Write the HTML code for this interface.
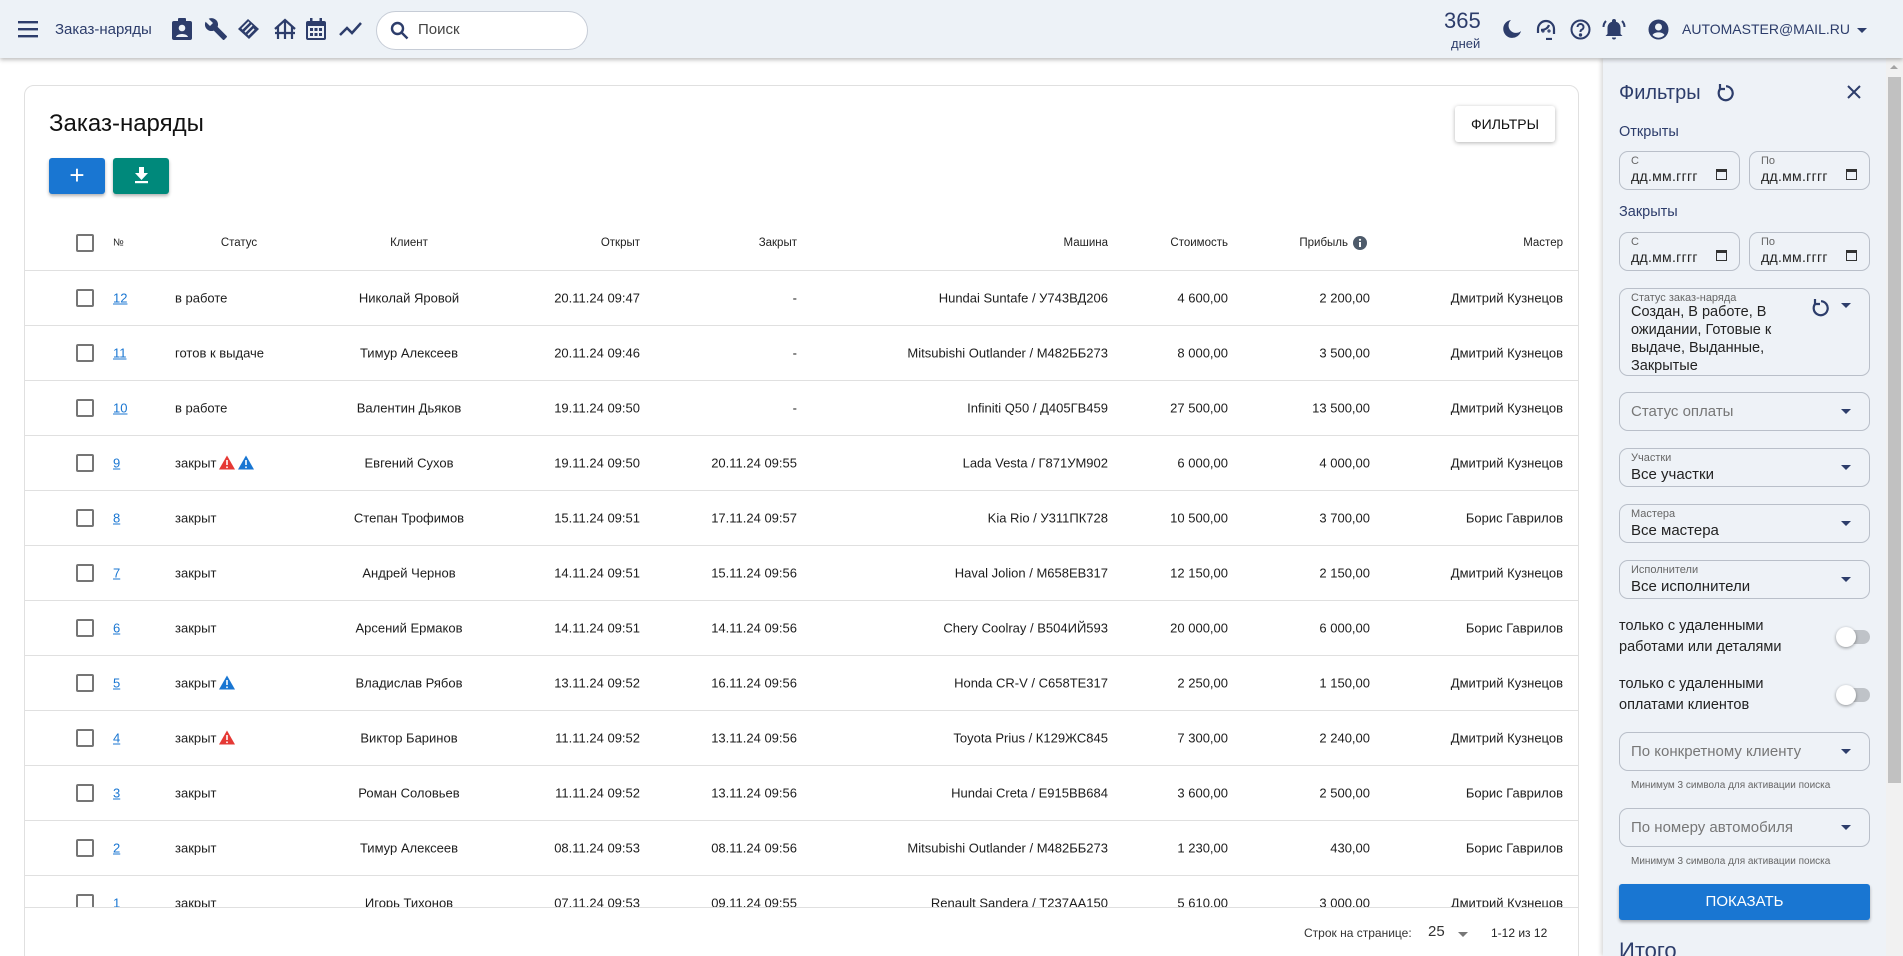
<!DOCTYPE html>
<html><head><meta charset="utf-8">
<style>
*{box-sizing:border-box;margin:0;padding:0}
html,body{width:1903px;height:956px;overflow:hidden}
body{background:#fff;font-family:"Liberation Sans",sans-serif;color:#1d1d1d;position:relative}
.abs{position:absolute}
.hdr{left:0;top:0;width:1903px;height:58px;background:#edf2f7;box-shadow:0 2px 4px rgba(0,0,0,.25);z-index:3}
.nav{fill:#2d3d6b}
.card{left:24px;top:85px;width:1555px;height:880px;border:1px solid #e0e0e0;border-radius:10px;background:#fff}
.row{position:absolute;left:24px;width:1555px;height:55px;border-top:1px solid #e0e0e0;font-size:13px}
.row span,.th span{position:absolute;top:50%;transform:translateY(-50%);white-space:nowrap}
.cb{position:absolute;left:52px;top:50%;margin-top:-9px;width:18px;height:18px;border:2px solid #757575;border-radius:2px}
.r{text-align:right}
.th{position:absolute;left:24px;top:215px;width:1555px;height:55px;font-size:11.5px;color:#222}
a{color:#1976d2;text-decoration:underline}
.tri{display:inline-block;vertical-align:-2px;margin-left:3px}
.panel{left:1603px;top:58px;width:283px;height:898px;background:#eef2f7;box-shadow:-2px 0 4px rgba(0,0,0,.15);z-index:2;color:#2d3d6b}
.fld{position:absolute;left:16px;width:251px;height:39px;border:1px solid #b9bfc9;border-radius:9px}
.lbl{position:absolute;left:11px;top:3px;font-size:11px;color:#666}
.val{position:absolute;left:11px;top:17px;font-size:15px;color:#222}
.ph{position:absolute;left:11px;top:10px;font-size:15px;color:#777}
.caret{position:absolute;right:18px;top:16px;width:0;height:0;border-left:5px solid transparent;border-right:5px solid transparent;border-top:5px solid #2d3d6b}
.dt{position:absolute;width:121px;height:39px;border:1px solid #b9bfc9;border-radius:9px}
.dt .l{position:absolute;left:11px;top:3px;font-size:11px;color:#666}
.dt .v{position:absolute;left:11px;top:16px;font-size:14px;color:#222;letter-spacing:.3px}
.dt i{position:absolute;right:12px;top:17px;width:11px;height:11px;border:1.5px solid #333;border-top-width:3px}
.hint{position:absolute;left:28px;font-size:10px;color:#666}
.tog{position:absolute;left:235px;width:32px;height:14px;border-radius:7px;background:#bfc3c8}
.tog:after{content:"";position:absolute;left:-2px;top:-3px;width:20px;height:20px;border-radius:50%;background:#fff;box-shadow:0 1px 3px rgba(0,0,0,.4)}
.tt{position:absolute;left:16px;font-size:14.5px;color:#222;line-height:21px}
</style></head><body>

<div class="abs hdr">
 <svg class="abs" style="left:18px;top:20px" width="22" height="18"><rect y="1" width="20" height="2.4" fill="#2d3d6b"/><rect y="8" width="20" height="2.4" fill="#2d3d6b"/><rect y="15" width="20" height="2.4" fill="#2d3d6b"/></svg>
 <div class="abs" style="left:55px;top:21px;font-size:15px;color:#2d3d6b">Заказ-наряды</div>
 <svg class="abs nav" style="left:172px;top:18px" width="20" height="22"><rect x="6" y="0" width="8" height="5" rx="1"/><rect x="0" y="3" width="20" height="19" rx="2"/><circle cx="10" cy="10" r="3.3" fill="#edf2f7"/><path d="M4 19c1-4 11-4 12 0z" fill="#edf2f7"/></svg>
 <svg class="abs nav" style="left:204px;top:17px" width="24" height="24"><path d="M22.7 19l-9.1-9.1c.9-2.3.4-5-1.5-6.9-2-2-5-2.4-7.4-1.3L9 6 6 9 1.6 4.7C.4 7.1.9 10.1 2.9 12.1c1.9 1.9 4.6 2.4 6.9 1.5l9.1 9.1c.4.4 1 .4 1.4 0l2.3-2.3c.5-.4.5-1.1.1-1.4z"/></svg>
 <svg class="abs nav" style="left:236px;top:18px" width="26" height="22"><path d="M2 11L12 1l11 10-10 10z"/><path d="M6 11l7-7M9 14l7-7M12 17l6-6" stroke="#edf2f7" stroke-width="1.6"/></svg>
 <svg class="abs" style="left:273px;top:18px" width="24" height="22" fill="none" stroke="#2d3d6b" stroke-width="2.2"><path d="M2 11L12 2l10 9M5 9v12M19 9v12M12 2v19M2 15h20"/></svg>
 <svg class="abs nav" style="left:306px;top:18px" width="20" height="22"><rect x="4" y="0" width="2.5" height="5"/><rect x="13.5" y="0" width="2.5" height="5"/><rect x="0" y="3" width="20" height="19" rx="2"/><rect x="2" y="8" width="16" height="12" fill="#edf2f7"/><g fill="#2d3d6b"><rect x="4" y="10" width="3" height="3"/><rect x="8.5" y="10" width="3" height="3"/><rect x="13" y="10" width="3" height="3"/><rect x="4" y="15" width="3" height="3"/><rect x="8.5" y="15" width="3" height="3"/><rect x="13" y="15" width="3" height="3"/></g></svg>
 <svg class="abs" style="left:339px;top:21px" width="24" height="16" fill="none" stroke="#2d3d6b" stroke-width="2.5"><path d="M1 14l7-7 5 5 9-10"/></svg>
 <div class="abs" style="left:376px;top:11px;width:212px;height:39px;background:#fff;border:1px solid #c6ccd6;border-radius:20px"></div>
 <svg class="abs" style="left:390px;top:21px" width="20" height="20" fill="none" stroke="#2d3d6b" stroke-width="2.4"><circle cx="7.5" cy="7.5" r="5.5"/><path d="M11.5 11.5l6 6"/></svg>
 <div class="abs" style="left:418px;top:21px;font-size:15px;color:#444">Поиск</div>
 <div class="abs" style="left:1444px;top:8px;font-size:22px;color:#2d3d6b">365</div>
 <div class="abs" style="left:1451px;top:36px;font-size:13px;color:#2d3d6b">дней</div>
 <svg class="abs nav" style="left:1502px;top:19px" width="20" height="20"><path d="M9 1a9 9 0 1 0 10 11A7 7 0 0 1 9 1z"/></svg>
 <svg class="abs" style="left:1535px;top:18px" width="22" height="22" fill="none" stroke="#2d3d6b" stroke-width="2.2"><path d="M3 15v-4a8 8 0 0 1 16 0v5M11 21h6"/><path d="M6 12c4 0 7-2 8-5" /><circle cx="8" cy="13" r=".5" fill="#2d3d6b"/><circle cx="14" cy="13" r=".5" fill="#2d3d6b"/></svg>
 <svg class="abs" style="left:1570px;top:19px" width="21" height="21" fill="none" stroke="#2d3d6b" stroke-width="2"><circle cx="10.5" cy="10.5" r="9"/><path d="M7.5 8a3 3 0 1 1 4 2.8c-1 .4-1 1-1 2.2"/><circle cx="10.5" cy="16" r=".7" fill="#2d3d6b"/></svg>
 <svg class="abs nav" style="left:1602px;top:17px" width="24" height="24"><path d="M12 2a2 2 0 0 0-2 2v.7C7 5.5 5.5 8 5.5 11v6l-2 2h17l-2-2v-6c0-3-1.5-5.5-4.5-6.3V4a2 2 0 0 0-2-2zM10 20.5a2 2 0 0 0 4 0z"/><path d="M4 4C2.5 5.5 1.5 7.5 1.5 10M20 4c1.5 1.5 2.5 3.5 2.5 6" stroke="#2d3d6b" stroke-width="2" fill="none"/></svg>
 <svg class="abs nav" style="left:1648px;top:19px" width="21" height="21"><circle cx="10.5" cy="10.5" r="10"/><circle cx="10.5" cy="8" r="3.5" fill="#edf2f7"/><path d="M4.5 16c2-3.5 10-3.5 12 0a8 8 0 0 1-12 0z" fill="#edf2f7"/></svg>
 <div class="abs" style="left:1682px;top:21px;font-size:14px;color:#2d3d6b">AUTOMASTER@MAIL.RU</div>
 <div class="abs" style="left:1857px;top:28px;border-left:5px solid transparent;border-right:5px solid transparent;border-top:5px solid #2d3d6b"></div>
</div>

<div class="abs card"></div>
<div class="abs" style="left:49px;top:110px;font-size:24px;color:#111">Заказ-наряды</div>
<div class="abs" style="left:49px;top:158px;width:56px;height:36px;background:#1976d2;border-radius:3px;box-shadow:0 2px 3px rgba(0,0,0,.3);color:#fff;font-size:26px;text-align:center;line-height:34px">+</div>
<div class="abs" style="left:113px;top:158px;width:56px;height:36px;background:#00897b;border-radius:3px;box-shadow:0 2px 3px rgba(0,0,0,.3)"><svg style="position:absolute;left:21px;top:9px" width="15" height="17" fill="#fff"><path d="M5 0h5v6h4l-6.5 7L1 6h4z"/><rect x="1" y="14" width="13" height="2.2"/></svg></div>
<div class="abs" style="left:1455px;top:106px;width:100px;height:36px;background:#fff;border-radius:3px;box-shadow:0 1px 4px rgba(0,0,0,.3);font-size:14px;text-align:center;line-height:36px;color:#111">ФИЛЬТРЫ</div>

<div class="th">
 <div class="cb"></div>
 <span style="left:89px;font-size:10px">№</span>
 <span style="left:190px;width:50px;text-align:center">Статус</span>
 <span style="left:355px;width:60px;text-align:center">Клиент</span>
 <span class="r" style="right:939px">Открыт</span>
 <span class="r" style="right:782px">Закрыт</span>
 <span class="r" style="right:471px">Машина</span>
 <span class="r" style="right:351px">Стоимость</span>
 <span class="r" style="right:231px">Прибыль</span>
 <svg style="position:absolute;left:1329px;top:21px" width="14" height="14"><circle cx="7" cy="7" r="7" fill="#4d5a6a"/><rect x="6" y="6" width="2" height="5" fill="#fff"/><circle cx="7" cy="3.8" r="1.1" fill="#fff"/></svg>
 <span class="r" style="right:16px">Мастер</span>
</div>

<div class="abs" style="left:0;top:0;width:1600px;height:907px;overflow:hidden">
<div class="row" style="top:270px"><div class="cb"></div><span style="left:89px"><a>12</a></span><span style="left:151px">в работе</span><span style="left:285px;width:200px;text-align:center">Николай Яровой</span><span style="right:939px">20.11.24 09:47</span><span style="right:782px">-</span><span style="right:471px">Hundai Suntafe / У743ВД206</span><span style="right:351px">4 600,00</span><span style="right:209px">2 200,00</span><span style="right:16px">Дмитрий Кузнецов</span></div>
<div class="row" style="top:325px"><div class="cb"></div><span style="left:89px"><a>11</a></span><span style="left:151px">готов к выдаче</span><span style="left:285px;width:200px;text-align:center">Тимур Алексеев</span><span style="right:939px">20.11.24 09:46</span><span style="right:782px">-</span><span style="right:471px">Mitsubishi Outlander / М482ББ273</span><span style="right:351px">8 000,00</span><span style="right:209px">3 500,00</span><span style="right:16px">Дмитрий Кузнецов</span></div>
<div class="row" style="top:380px"><div class="cb"></div><span style="left:89px"><a>10</a></span><span style="left:151px">в работе</span><span style="left:285px;width:200px;text-align:center">Валентин Дьяков</span><span style="right:939px">19.11.24 09:50</span><span style="right:782px">-</span><span style="right:471px">Infiniti Q50 / Д405ГВ459</span><span style="right:351px">27 500,00</span><span style="right:209px">13 500,00</span><span style="right:16px">Дмитрий Кузнецов</span></div>
<div class="row" style="top:435px"><div class="cb"></div><span style="left:89px"><a>9</a></span><span style="left:151px">закрыт<svg class="tri" width="16" height="14"><path d="M8 0l8 14H0z" fill="#e53935"/><rect x="7.2" y="4.5" width="1.6" height="5" fill="#fff"/><rect x="7.2" y="11" width="1.6" height="1.6" fill="#fff"/></svg><svg class="tri" width="16" height="14"><path d="M8 0l8 14H0z" fill="#1976d2"/><rect x="7.2" y="4.5" width="1.6" height="5" fill="#fff"/><rect x="7.2" y="11" width="1.6" height="1.6" fill="#fff"/></svg></span><span style="left:285px;width:200px;text-align:center">Евгений Сухов</span><span style="right:939px">19.11.24 09:50</span><span style="right:782px">20.11.24 09:55</span><span style="right:471px">Lada Vesta / Г871УМ902</span><span style="right:351px">6 000,00</span><span style="right:209px">4 000,00</span><span style="right:16px">Дмитрий Кузнецов</span></div>
<div class="row" style="top:490px"><div class="cb"></div><span style="left:89px"><a>8</a></span><span style="left:151px">закрыт</span><span style="left:285px;width:200px;text-align:center">Степан Трофимов</span><span style="right:939px">15.11.24 09:51</span><span style="right:782px">17.11.24 09:57</span><span style="right:471px">Kia Rio / У311ПК728</span><span style="right:351px">10 500,00</span><span style="right:209px">3 700,00</span><span style="right:16px">Борис Гаврилов</span></div>
<div class="row" style="top:545px"><div class="cb"></div><span style="left:89px"><a>7</a></span><span style="left:151px">закрыт</span><span style="left:285px;width:200px;text-align:center">Андрей Чернов</span><span style="right:939px">14.11.24 09:51</span><span style="right:782px">15.11.24 09:56</span><span style="right:471px">Haval Jolion / М658ЕВ317</span><span style="right:351px">12 150,00</span><span style="right:209px">2 150,00</span><span style="right:16px">Дмитрий Кузнецов</span></div>
<div class="row" style="top:600px"><div class="cb"></div><span style="left:89px"><a>6</a></span><span style="left:151px">закрыт</span><span style="left:285px;width:200px;text-align:center">Арсений Ермаков</span><span style="right:939px">14.11.24 09:51</span><span style="right:782px">14.11.24 09:56</span><span style="right:471px">Chery Coolray / В504ИЙ593</span><span style="right:351px">20 000,00</span><span style="right:209px">6 000,00</span><span style="right:16px">Борис Гаврилов</span></div>
<div class="row" style="top:655px"><div class="cb"></div><span style="left:89px"><a>5</a></span><span style="left:151px">закрыт<svg class="tri" width="16" height="14"><path d="M8 0l8 14H0z" fill="#1976d2"/><rect x="7.2" y="4.5" width="1.6" height="5" fill="#fff"/><rect x="7.2" y="11" width="1.6" height="1.6" fill="#fff"/></svg></span><span style="left:285px;width:200px;text-align:center">Владислав Рябов</span><span style="right:939px">13.11.24 09:52</span><span style="right:782px">16.11.24 09:56</span><span style="right:471px">Honda CR-V / С658ТЕ317</span><span style="right:351px">2 250,00</span><span style="right:209px">1 150,00</span><span style="right:16px">Дмитрий Кузнецов</span></div>
<div class="row" style="top:710px"><div class="cb"></div><span style="left:89px"><a>4</a></span><span style="left:151px">закрыт<svg class="tri" width="16" height="14"><path d="M8 0l8 14H0z" fill="#e53935"/><rect x="7.2" y="4.5" width="1.6" height="5" fill="#fff"/><rect x="7.2" y="11" width="1.6" height="1.6" fill="#fff"/></svg></span><span style="left:285px;width:200px;text-align:center">Виктор Баринов</span><span style="right:939px">11.11.24 09:52</span><span style="right:782px">13.11.24 09:56</span><span style="right:471px">Toyota Prius / К129ЖС845</span><span style="right:351px">7 300,00</span><span style="right:209px">2 240,00</span><span style="right:16px">Дмитрий Кузнецов</span></div>
<div class="row" style="top:765px"><div class="cb"></div><span style="left:89px"><a>3</a></span><span style="left:151px">закрыт</span><span style="left:285px;width:200px;text-align:center">Роман Соловьев</span><span style="right:939px">11.11.24 09:52</span><span style="right:782px">13.11.24 09:56</span><span style="right:471px">Hundai Creta / Е915ВВ684</span><span style="right:351px">3 600,00</span><span style="right:209px">2 500,00</span><span style="right:16px">Борис Гаврилов</span></div>
<div class="row" style="top:820px"><div class="cb"></div><span style="left:89px"><a>2</a></span><span style="left:151px">закрыт</span><span style="left:285px;width:200px;text-align:center">Тимур Алексеев</span><span style="right:939px">08.11.24 09:53</span><span style="right:782px">08.11.24 09:56</span><span style="right:471px">Mitsubishi Outlander / М482ББ273</span><span style="right:351px">1 230,00</span><span style="right:209px">430,00</span><span style="right:16px">Борис Гаврилов</span></div>
<div class="row" style="top:875px"><div class="cb"></div><span style="left:89px"><a>1</a></span><span style="left:151px">закрыт</span><span style="left:285px;width:200px;text-align:center">Игорь Тихонов</span><span style="right:939px">07.11.24 09:53</span><span style="right:782px">09.11.24 09:55</span><span style="right:471px">Renault Sandera / Т237АА150</span><span style="right:351px">5 610,00</span><span style="right:209px">3 000,00</span><span style="right:16px">Дмитрий Кузнецов</span></div>
</div>
<div class="abs" style="left:24px;top:907px;width:1555px;border-top:1px solid #e0e0e0"></div>
<div class="abs" style="left:1304px;top:926px;font-size:12px;color:#333">Строк на странице:</div>
<div class="abs" style="left:1428px;top:923px;font-size:15px;color:#333">25</div>
<div class="abs" style="left:1458px;top:932px;border-left:5px solid transparent;border-right:5px solid transparent;border-top:5px solid #777"></div>
<div class="abs" style="left:1491px;top:926px;font-size:12px;color:#222">1-12 из 12</div>

<div class="abs panel">
 <div class="abs" style="left:16px;top:24px;font-size:20px">Фильтры</div>
 <svg class="abs" style="left:113px;top:26px" width="18" height="18" fill="none" stroke="#2d3d6b" stroke-width="2.2"><path d="M5 4a7 7 0 1 0 5-1.8"/><path d="M4 0v5h5" /></svg>
 <svg class="abs" style="left:244px;top:27px" width="14" height="14" stroke="#2d3d6b" stroke-width="2"><path d="M1 1l12 12M13 1L1 13"/></svg>
 <div class="abs" style="left:16px;top:66px;font-size:14.5px">Открыты</div>
 <div class="dt" style="left:16px;top:93px"><div class="l">С</div><div class="v">дд.мм.гггг</div><i></i></div>
 <div class="dt" style="left:146px;top:93px"><div class="l">По</div><div class="v">дд.мм.гггг</div><i></i></div>
 <div class="abs" style="left:16px;top:146px;font-size:14.5px">Закрыты</div>
 <div class="dt" style="left:16px;top:174px"><div class="l">С</div><div class="v">дд.мм.гггг</div><i></i></div>
 <div class="dt" style="left:146px;top:174px"><div class="l">По</div><div class="v">дд.мм.гггг</div><i></i></div>
 <div class="fld" style="top:230px;height:88px"><div class="lbl">Статус заказ-наряда</div><div style="position:absolute;left:11px;top:14px;width:180px;font-size:14.5px;line-height:18px;color:#222">Создан, В работе, В ожидании, Готовые к выдаче, Выданные, Закрытые</div>
  <svg style="position:absolute;left:191px;top:10px" width="18" height="18" fill="none" stroke="#2d3d6b" stroke-width="2.2"><path d="M5 4a7 7 0 1 0 5-1.8"/><path d="M4 0v5h5"/></svg>
  <div class="caret" style="top:14px"></div></div>
 <div class="fld" style="top:334px"><div class="ph">Статус оплаты</div><div class="caret"></div></div>
 <div class="fld" style="top:390px"><div class="lbl">Участки</div><div class="val">Все участки</div><div class="caret"></div></div>
 <div class="fld" style="top:446px"><div class="lbl">Мастера</div><div class="val">Все мастера</div><div class="caret"></div></div>
 <div class="fld" style="top:502px"><div class="lbl">Исполнители</div><div class="val">Все исполнители</div><div class="caret"></div></div>
 <div class="tt" style="top:558px">только с удаленными<br>работами или деталями</div>
 <div class="tog" style="top:572px"></div>
 <div class="tt" style="top:616px">только с удаленными<br>оплатами клиентов</div>
 <div class="tog" style="top:630px"></div>
 <div class="fld" style="top:674px"><div class="ph">По конкретному клиенту</div><div class="caret"></div></div>
 <div class="hint" style="top:722px">Минимум 3 символа для активации поиска</div>
 <div class="fld" style="top:750px"><div class="ph">По номеру автомобиля</div><div class="caret"></div></div>
 <div class="hint" style="top:798px">Минимум 3 символа для активации поиска</div>
 <div class="abs" style="left:16px;top:826px;width:251px;height:36px;background:#1976d2;border-radius:3px;box-shadow:0 2px 3px rgba(0,0,0,.3);color:#fff;font-size:15px;text-align:center;line-height:36px">ПОКАЗАТЬ</div>
 <div class="abs" style="left:16px;top:880px;font-size:22px">Итого</div>
</div>
<div class="abs" style="left:1886px;top:58px;width:17px;height:898px;background:#f1f1f1;z-index:2"></div>
<div class="abs" style="left:1890px;top:65px;border-left:4px solid transparent;border-right:4px solid transparent;border-bottom:4px solid #a3a3a3;z-index:3"></div>
<div class="abs" style="left:1888px;top:77px;width:13px;height:706px;background:#c1c1c1;z-index:3"></div>
</body></html>
